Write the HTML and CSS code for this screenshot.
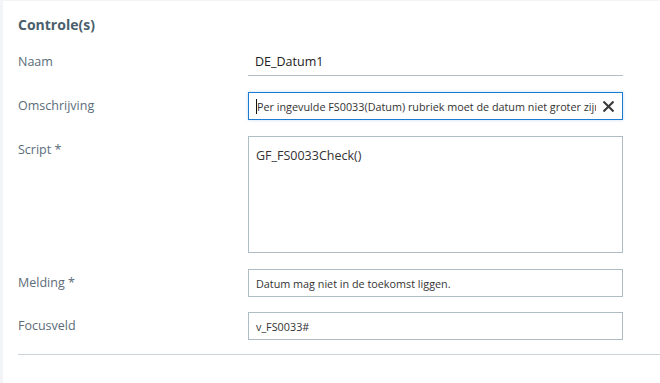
FILE: index.html
```html
<!DOCTYPE html>
<html lang="nl">
<head>
  <meta charset="UTF-8">
  <title>Controle(s)</title>
  <link rel="stylesheet" href="styles.css">
</head>
<body>
  <div class="panel">
    <h2 class="title">Controle(s)</h2>

    <div class="form">
      <label class="lbl">Naam</label>
      <div class="field plain">DE_Datum1</div>

      <label class="lbl">Omschrijving</label>
      <div class="field focus">
        <span class="caret"></span><span class="txt">Per ingevulde FS0033(Datum) rubriek moet de datum niet groter zijn</span>
        <svg class="clear" width="11" height="11" viewBox="0 0 11 11"><path d="M1.2 1.2 L9.8 9.8 M9.8 1.2 L1.2 9.8" stroke="#3a3a3a" stroke-width="2.1" stroke-linecap="square"/></svg>
      </div>

      <label class="lbl">Script *</label>
      <div class="field area">GF_FS0033Check()</div>

      <label class="lbl">Melding *</label>
      <div class="field small">Datum mag niet in de toekomst liggen.</div>

      <label class="lbl last">Focusveld</label>
      <div class="field small last">v_FS0033#</div>
    </div>

    <hr class="divider">
  </div>
</body>
</html>
```

FILE: styles.css
```css
body { margin: 0; background: #f2f4f7; font-family: "Open Sans", sans-serif; }
.panel { background: #fff; margin: 1px 0 0 3px; padding: 14px 0 30px 15px; height: 338px; }
.title { margin: 0 0 13px 0; font-size: 14px; font-weight: 700; color: #4a5e6c; line-height: 20px; }
.form { display: grid; grid-template-columns: 230px 375px; row-gap: 16px; align-items: start; }
.lbl { font-size: 12.5px; color: #5b6c79; line-height: 18px; padding-top: 5px; }
.lbl.last, .field.last { margin-top: -1px; }
.field { box-sizing: border-box; height: 28px; border: 1px solid #aebcc6; padding: 0 7px; font-size: 10.8px; color: #333; display: flex; align-items: center; white-space: nowrap; overflow: hidden; }
.field.plain { border: none; border-bottom: 1px solid #b5bec6; font-size: 12.5px; color: #222; }
.field.focus { border-color: #1b7bd0; box-shadow: 0 0 3px rgba(27,123,208,0.25); padding-right: 8px; }
.caret { display: inline-block; width: 1px; height: 15px; background: #111; flex: none; }
.txt { flex: 1; overflow: hidden; }
.clear { flex: none; margin-left: 7px; }
.field.area { height: 117px; align-items: flex-start; padding-top: 10px; font-size: 12.5px; }
.divider { border: none; border-top: 1px solid #ccd3d9; margin: 14px 0 0 0; }
```
